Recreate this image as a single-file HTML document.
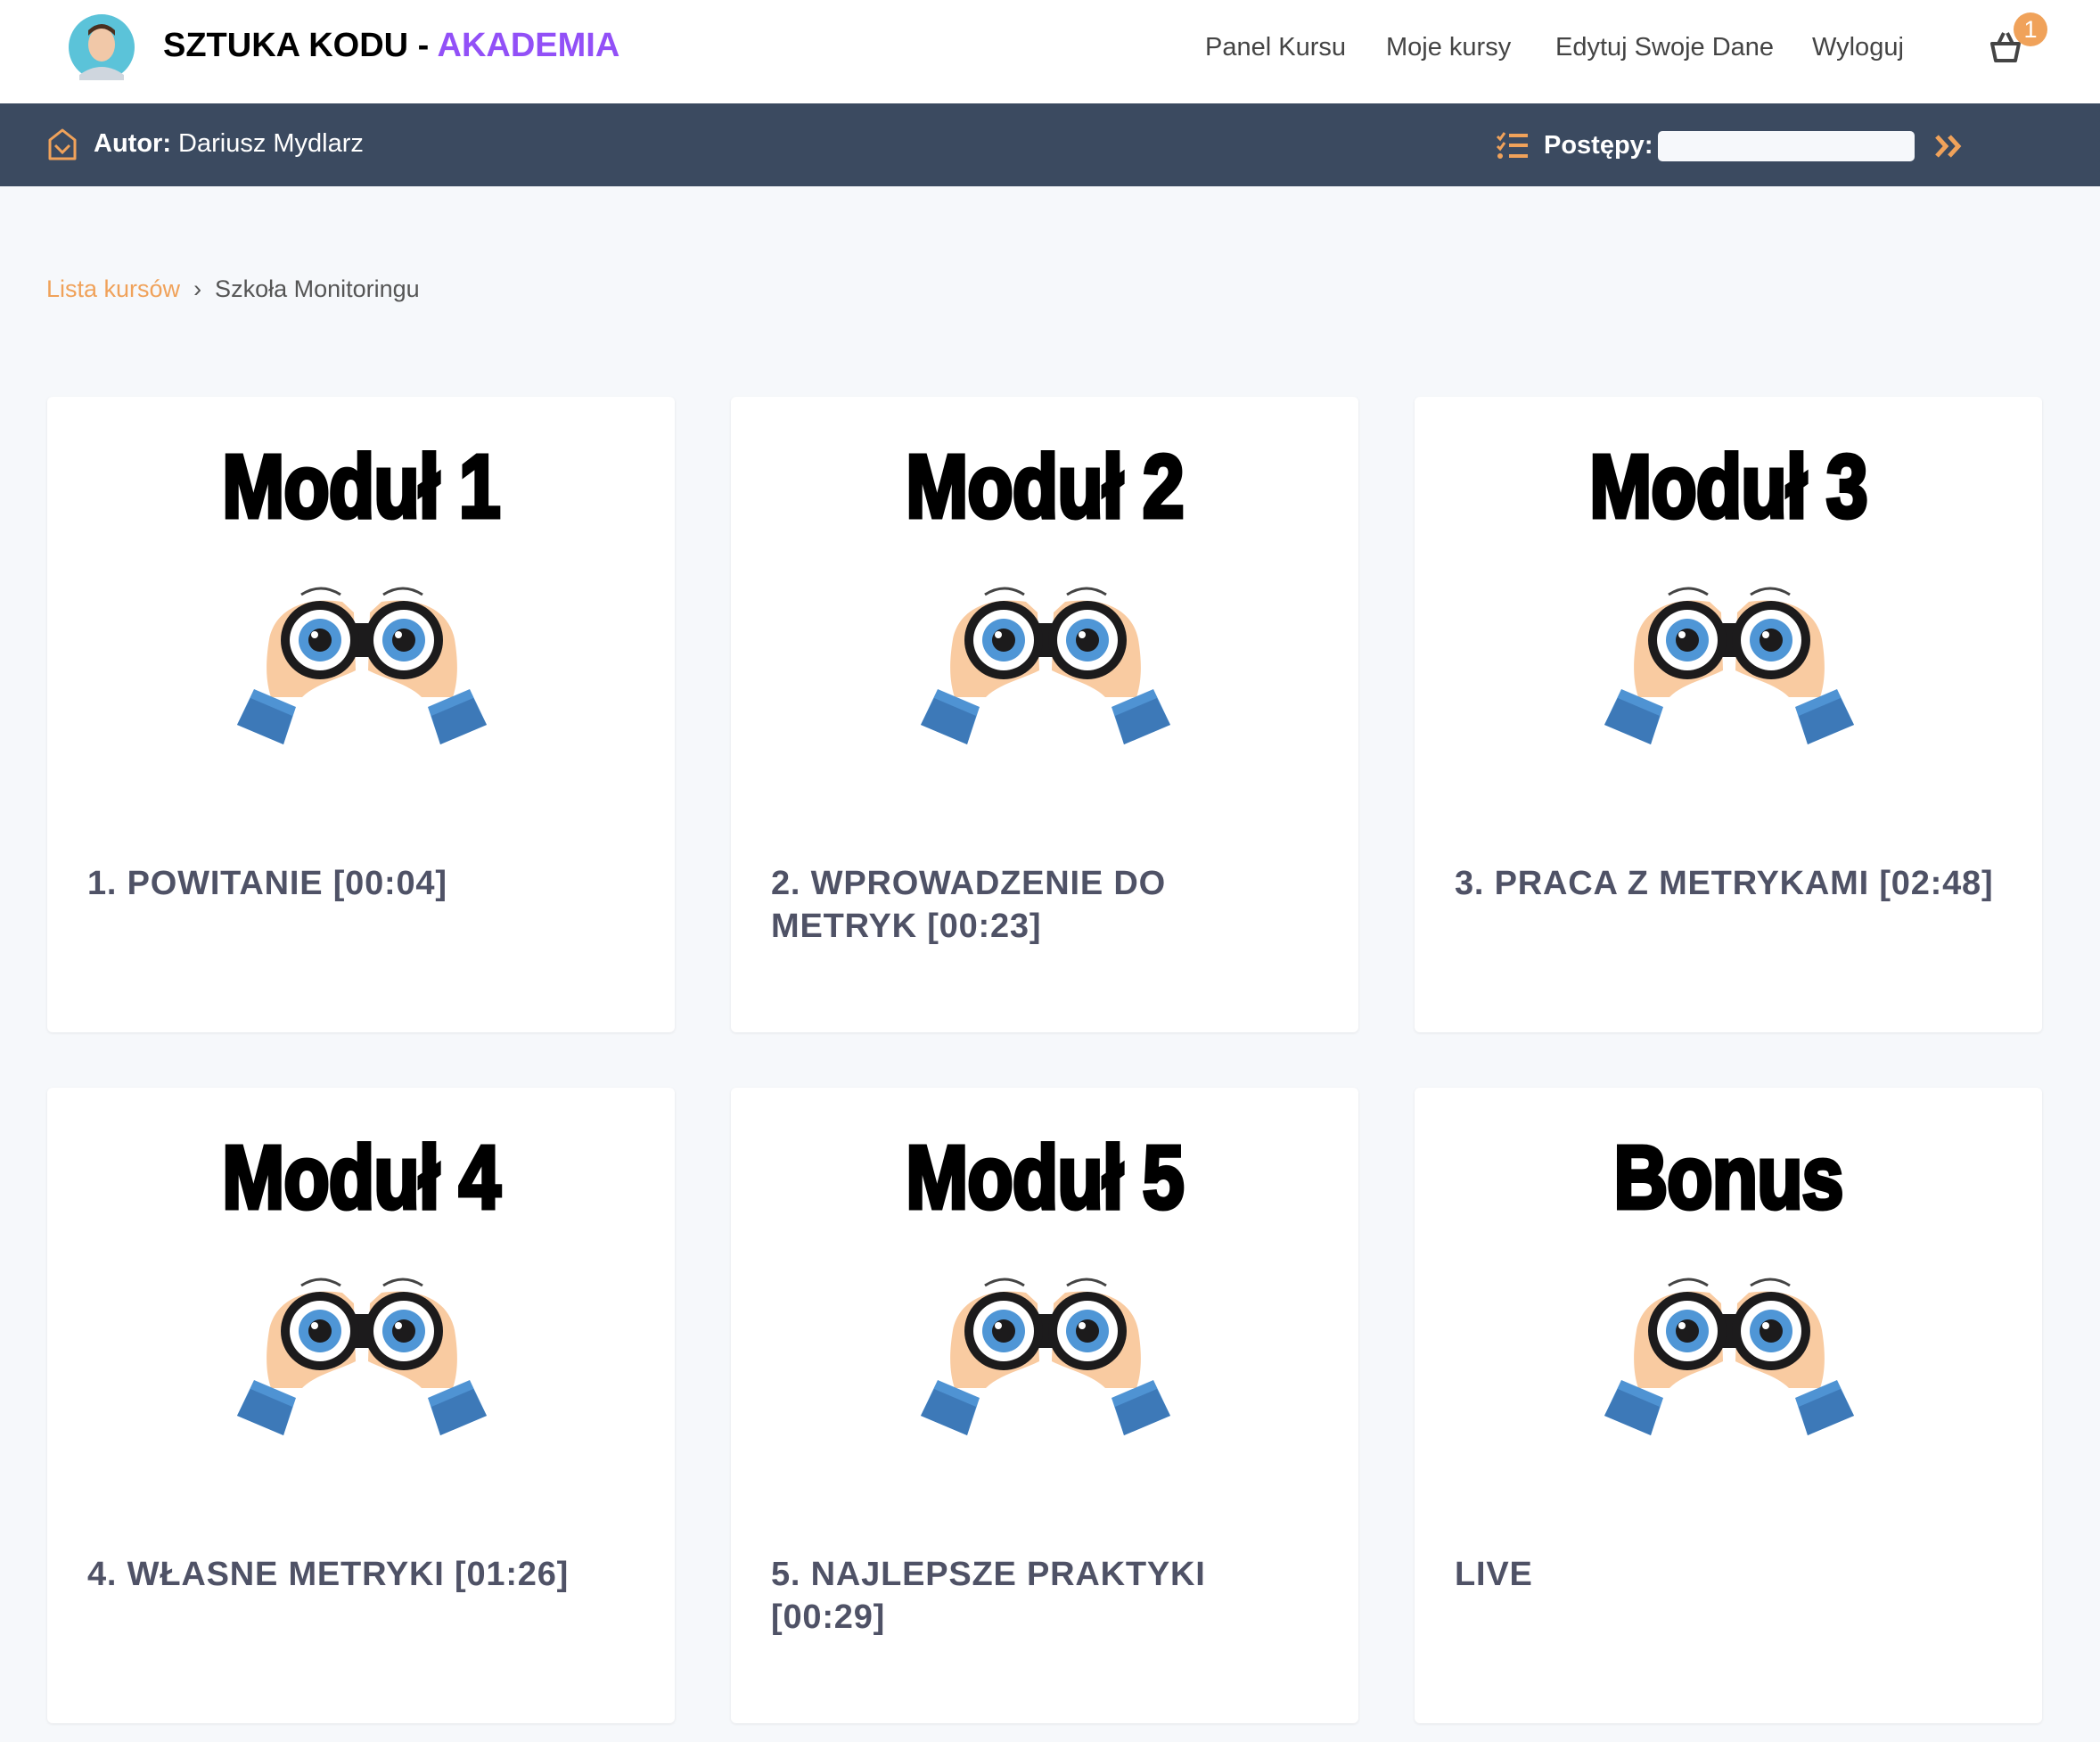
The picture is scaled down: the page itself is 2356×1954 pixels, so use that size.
<!DOCTYPE html>
<html><head><meta charset="utf-8"><style>
*{margin:0;padding:0;box-sizing:border-box}
body{width:2356px;height:1954px;background:#f6f8fb;font-family:"Liberation Sans",sans-serif;position:relative;overflow:hidden}
.top{position:absolute;left:0;top:0;width:2356px;height:116px;background:#fff}
.bar{position:absolute;left:0;top:116px;width:2356px;height:93px;background:#3b4a60}
.abs{position:absolute;white-space:nowrap}
.nav{font-size:29px;color:#444;top:37px}
.card{position:absolute;width:704px;height:713px;background:#fff;border-radius:6px;box-shadow:0 1px 3px rgba(0,0,0,.08)}
.ttl{position:absolute;left:0;width:704px;top:44px;text-align:center;font-size:100px;font-weight:bold;color:#000;-webkit-text-stroke:5px #000;transform:scaleX(.84);letter-spacing:-1px}
.bin{position:absolute;left:211px;top:212px}
.lab{position:absolute;left:45px;top:522px;font-size:38px;font-weight:bold;color:#4f5266;letter-spacing:0.8px;line-height:48px}
</style></head><body>
<div class="top"></div>
<svg class="abs" style="left:77px;top:16px" width="74" height="74"><circle cx="37" cy="37" r="37" fill="#5bc3d9"/><ellipse cx="37" cy="34" rx="15" ry="19" fill="#f1c8a8"/><path d="M22 24 Q37 8 52 24 L52 18 Q37 4 22 18Z" fill="#4a3020"/><path d="M12 68 Q37 50 62 68 L62 74 L12 74Z" fill="#cfd6de"/></svg>
<div class="abs" style="left:183px;top:30px;font-size:38px;font-weight:bold;color:#000">SZTUKA KODU - <span style="color:#9250f7">AKADEMIA</span></div>
<div class="abs nav" style="left:1352px">Panel Kursu</div>
<div class="abs nav" style="left:1555px">Moje kursy</div>
<div class="abs nav" style="left:1745px">Edytuj Swoje Dane</div>
<div class="abs nav" style="left:2033px">Wyloguj</div>
<svg class="abs" style="left:2230px;top:32px" width="40" height="40"><path d="M5 17 L35 17 L31 36 L9 36 Z" fill="none" stroke="#444" stroke-width="4" stroke-linejoin="round"/><path d="M12 17 L18 5 M28 17 L22 5" stroke="#444" stroke-width="4"/></svg>
<div class="abs" style="left:2259px;top:14px;width:38px;height:38px;border-radius:50%;background:#f0a25a;color:#fff;font-size:27px;text-align:center;line-height:38px">1</div>
<div class="bar"></div>
<svg class="abs" style="left:52px;top:143px" width="36" height="38"><path d="M4 14 L18 3 L32 14 L32 35 L4 35 Z" fill="none" stroke="#f0a25a" stroke-width="3" stroke-linejoin="round"/><path d="M10 20 L18 28 L26 20" fill="none" stroke="#f0a25a" stroke-width="3"/></svg>
<div class="abs" style="left:105px;top:145px;font-size:29px;color:#fff"><b>Autor:</b> Dariusz Mydlarz</div>
<svg class="abs" style="left:1678px;top:147px" width="38" height="32"><path d="M2 6 L5 9 L10 2 M2 17 L5 20 L10 13" fill="none" stroke="#f0a25a" stroke-width="3"/><circle cx="5" cy="28" r="3" fill="#f0a25a"/><path d="M15 5 H36 M15 16 H36 M15 28 H36" stroke="#f0a25a" stroke-width="4"/></svg>
<div class="abs" style="left:1732px;top:147px;font-size:29px;color:#fff;font-weight:bold">Postępy:</div>
<div class="abs" style="left:1860px;top:147px;width:288px;height:34px;background:#f6f8fb;border-radius:5px"></div>
<svg class="abs" style="left:2170px;top:150px" width="34" height="28"><path d="M3 3 L13 14 L3 25 M17 3 L27 14 L17 25" fill="none" stroke="#f0a25a" stroke-width="5"/></svg>
<div class="abs" style="left:52px;top:309px;font-size:27px;color:#555"><span style="color:#f0a25a">Lista kursów</span> &nbsp;›&nbsp; Szkoła Monitoringu</div>

<svg width="0" height="0" style="position:absolute"><defs><g id="b">
<path d="M74 10 Q96 -4 118 10 M166 10 Q188 -4 210 10" fill="none" stroke="#444" stroke-width="3"/>
<path d="M120 18 C80 12 45 25 38 60 C33 90 35 110 40 125 L75 125 C90 110 115 105 135 95 L133 30 Z" fill="#f9cba1"/>
<path d="M164 18 C204 12 239 25 246 60 C251 90 249 110 244 125 L209 125 C194 110 169 105 149 95 L151 30 Z" fill="#f9cba1"/>
<rect x="93" y="42" width="98" height="38" fill="#1c1b1c"/>
<circle cx="95" cy="61" r="44" fill="#1c1b1c"/><circle cx="189" cy="61" r="44" fill="#1c1b1c"/>
<circle cx="95" cy="61" r="34" fill="#fff"/><circle cx="189" cy="61" r="34" fill="#fff"/>
<circle cx="95" cy="61" r="24" fill="#4f96d6"/><circle cx="189" cy="61" r="24" fill="#4f96d6"/>
<circle cx="95" cy="61" r="13" fill="#1c1b1c"/><circle cx="189" cy="61" r="13" fill="#1c1b1c"/>
<circle cx="89" cy="55" r="4" fill="#fff"/><circle cx="183" cy="55" r="4" fill="#fff"/>
<polygon points="2,156 21,116 68,136 54,178" fill="#4f93d3"/>
<polygon points="2,156 17,126 64,146 54,178" fill="#3d79b8"/>
<polygon points="282,156 263,116 216,136 230,178" fill="#4f93d3"/>
<polygon points="282,156 267,126 220,146 230,178" fill="#3d79b8"/>
</g></defs></svg>

<div class="card" style="left:53px;top:445px"><div class="ttl">Moduł 1</div><svg class="bin" width="284" height="180"><use href="#b"/></svg><div class="lab">1. POWITANIE [00:04]</div></div>
<div class="card" style="left:820px;top:445px"><div class="ttl">Moduł 2</div><svg class="bin" width="284" height="180"><use href="#b"/></svg><div class="lab">2. WPROWADZENIE DO<br>METRYK [00:23]</div></div>
<div class="card" style="left:1587px;top:445px"><div class="ttl">Moduł 3</div><svg class="bin" width="284" height="180"><use href="#b"/></svg><div class="lab">3. PRACA Z METRYKAMI [02:48]</div></div>
<div class="card" style="left:53px;top:1220px"><div class="ttl">Moduł 4</div><svg class="bin" width="284" height="180"><use href="#b"/></svg><div class="lab">4. WŁASNE METRYKI [01:26]</div></div>
<div class="card" style="left:820px;top:1220px"><div class="ttl">Moduł 5</div><svg class="bin" width="284" height="180"><use href="#b"/></svg><div class="lab">5. NAJLEPSZE PRAKTYKI<br>[00:29]</div></div>
<div class="card" style="left:1587px;top:1220px"><div class="ttl">Bonus</div><svg class="bin" width="284" height="180"><use href="#b"/></svg><div class="lab">LIVE</div></div>
</body></html>
